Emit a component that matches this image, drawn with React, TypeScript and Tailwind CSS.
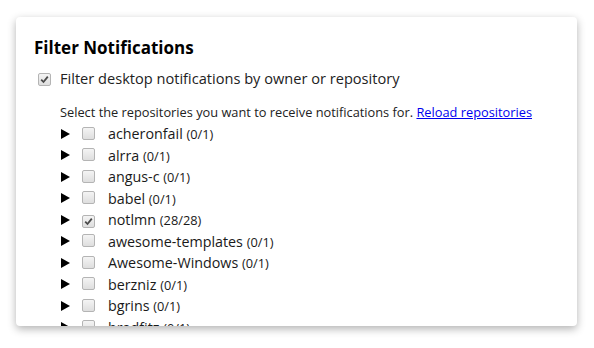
import React from "react";

const repos: { name: string; count: string; checked?: boolean }[] = [
  { name: "acheronfail", count: "(0/1)" },
  { name: "alrra", count: "(0/1)" },
  { name: "angus-c", count: "(0/1)" },
  { name: "babel", count: "(0/1)" },
  { name: "notlmn", count: "(28/28)", checked: true },
  { name: "awesome-templates", count: "(0/1)" },
  { name: "Awesome-Windows", count: "(0/1)" },
  { name: "berzniz", count: "(0/1)" },
  { name: "bgrins", count: "(0/1)" },
  { name: "bradfitz", count: "(0/1)" },
  { name: "brunolemos", count: "(0/1)" },
];

function Box({ checked }: { checked?: boolean }) {
  return (
    <span className="relative inline-flex h-[13px] w-[13px] shrink-0 items-center justify-center rounded-[2px] border border-[#b4b4b4] bg-gradient-to-b from-[#f4f4f4] to-[#dedede]">
      {checked && (
        <svg width="9" height="9" viewBox="0 0 9 9">
          <path d="M1.2 4.6 L3.5 7 L7.8 1.6" fill="none" stroke="#4a4a4a" strokeWidth="1.8" />
        </svg>
      )}
    </span>
  );
}

export default function App() {
  return (
    <div
      className="h-[348px] w-[594px] bg-white pl-[16px] pt-[17px]"
      style={{ fontFamily: '"Open Sans", "Noto Sans", sans-serif' }}
    >
      <div className="h-[309px] w-[561px] overflow-hidden rounded-[4px] bg-white pl-[18px] pt-[18px] shadow-[0_3px_8px_rgba(0,0,0,0.3)]">
        <h1 className="text-[17px] font-bold leading-[26px] text-black">Filter Notifications</h1>
        <div className="mt-[5px] flex items-center">
          <span className="ml-[4px]">
            <Box checked />
          </span>
          <span className="ml-[9px] text-[14.6px] leading-[22px] text-[#222]">
            Filter desktop notifications by owner or repository
          </span>
        </div>
        <div className="ml-[26px] mt-[12px] text-[12.8px] leading-[20px] text-[#222]">
          Select the repositories you want to receive notifications for.{" "}
          <a href="#" className="text-[#0000ee] underline">
            Reload repositories
          </a>
        </div>
        <div className="ml-[27px] mt-[1px] flex flex-col">
          {repos.map((r) => (
            <div key={r.name} className="flex h-[21.5px] items-center">
              <svg width="9" height="10" viewBox="0 0 9 10" className="shrink-0">
                <path d="M0 0 L9 5 L0 10 Z" fill="#000" />
              </svg>
              <span className="ml-[12px]">
                <Box checked={r.checked} />
              </span>
              <span className="ml-[13px] whitespace-nowrap text-[14.3px] text-[#1a1a1a]">
                {r.name} <span className="text-[12.8px]">{r.count}</span>
              </span>
            </div>
          ))}
        </div>
      </div>
    </div>
  );
}
